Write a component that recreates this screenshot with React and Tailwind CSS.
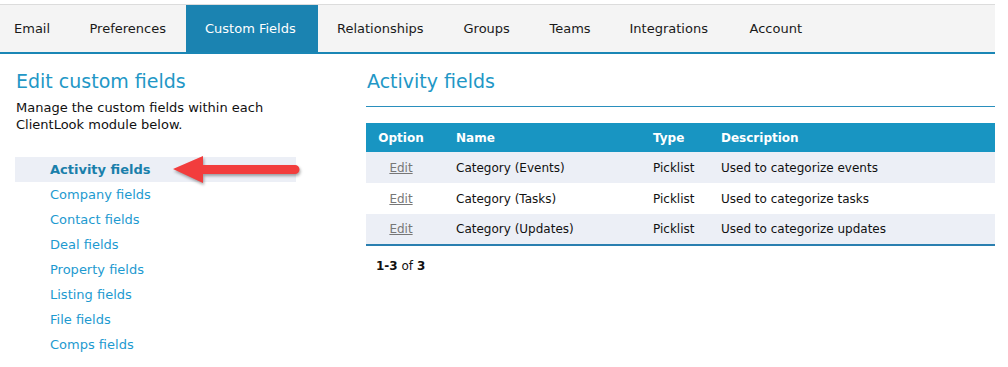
import React from "react";

const tabs = [
  { label: "Email", w: "w-[70px] pl-[14px]" },
  { label: "Preferences", w: "w-[116px] pl-[19.5px]" },
  { label: "Custom Fields", w: "w-[132px] pl-[19px]" },
  { label: "Relationships", w: "w-[126px] pl-[19px]" },
  { label: "Groups", w: "w-[86px] pl-[19.5px]" },
  { label: "Teams", w: "w-[80px] pl-[19.5px]" },
  { label: "Integrations", w: "w-[120px] pl-[19.5px]" },
  { label: "Account", w: "w-[100px] pl-[19.5px]" },
];

const modules = [
  "Activity fields",
  "Company fields",
  "Contact fields",
  "Deal fields",
  "Property fields",
  "Listing fields",
  "File fields",
  "Comps fields",
];

const rows = [
  { name: "Category (Events)", type: "Picklist", desc: "Used to categorize events" },
  { name: "Category (Tasks)", type: "Picklist", desc: "Used to categorize tasks" },
  { name: "Category (Updates)", type: "Picklist", desc: "Used to categorize updates" },
];

// red callout arrow pointing at the active module
const Arrow = () => (
  <svg width="132" height="32" viewBox="0 0 132 32" className="absolute left-[156px] top-[-2px]" style={{ filter: "drop-shadow(1px 2px 1.5px rgba(0,0,0,0.35))" }}>
    <path d="M2 14 L32 1 L32 10 L124 10 A4.5 4.5 0 0 1 124 19 L32 19 L32 28 Z" fill="#f23d3d" />
  </svg>
);

export default function App() {
  return (
    <div className="w-[995px] bg-white font-['DejaVu_Sans',Verdana,sans-serif] text-[#111]">
      {/* Tabs */}
      <div className="mt-[4px] flex h-[50px] border-t border-[#dcdcdc] border-b-2 border-b-[#1a86b5] bg-[#f4f4f4]">
        {tabs.map((t) => (
          <div
            key={t.label}
            className={`flex shrink-0 items-center whitespace-nowrap text-[13px] ${t.w} ${
              t.label === "Custom Fields" ? "bg-[#1b83b1] text-white" : "text-[#1a1a1a]"
            }`}
          >
            {t.label}
          </div>
        ))}
      </div>

      <div className="flex">
        {/* Sidebar */}
        <div className="w-[366px] shrink-0 pl-[15px] pt-[15px]">
          <h2 className="pl-[1px] text-[19px] leading-[24px] text-[#2297c6]">Edit custom fields</h2>
          <p className="mt-[6px] w-[270px] pl-[1px] text-[13px] leading-[17px] text-[#111]">
            Manage the custom fields within each ClientLook module below.
          </p>
          <ul className="mt-[24px] w-[281px]">
            {modules.map((m, i) => (
              <li
                key={m}
                className={`relative flex h-[25px] items-center pl-[35px] text-[13px] ${
                  i === 0 ? "bg-[#eceff6] font-bold text-[#1a7fab]" : "text-[#1d9ad0]"
                }`}
              >
                {m}
                {i === 0 && <Arrow />}
              </li>
            ))}
          </ul>
        </div>

        {/* Main */}
        <div className="flex-1 pt-[15px]">
          <h2 className="pl-[1px] text-[19px] leading-[24px] text-[#2297c6]">Activity fields</h2>
          <div className="mt-[13px] h-px bg-[#2a8fbd]" />
          <table className="mt-[16px] w-full table-fixed border-collapse text-[12px]">
            <thead>
              <tr className="h-[29px] bg-[#1895c2] text-left font-bold text-white">
                <th className="w-[70px] text-center">Option</th>
                <th className="w-[197px] pl-[20px]">Name</th>
                <th className="w-[68px] pl-[20px]">Type</th>
                <th className="pl-[20px]">Description</th>
              </tr>
            </thead>
            <tbody>
              {rows.map((r, i) => (
                <tr
                  key={r.name}
                  className={`h-[31px] ${i % 2 === 0 ? "bg-[#eceff6]" : "bg-white"} ${
                    i === rows.length - 1 ? "border-b-2 border-[#2a7fb0]" : ""
                  }`}
                >
                  <td className="text-center">
                    <span className="text-[#777] underline">Edit</span>
                  </td>
                  <td className="pl-[20px]">{r.name}</td>
                  <td className="pl-[20px]">{r.type}</td>
                  <td className="pl-[20px]">{r.desc}</td>
                </tr>
              ))}
            </tbody>
          </table>
          <div className="mt-[11px] pl-[10px] text-[12px]">
            <b>1-3</b> of <b>3</b>
          </div>
        </div>
      </div>
    </div>
  );
}
